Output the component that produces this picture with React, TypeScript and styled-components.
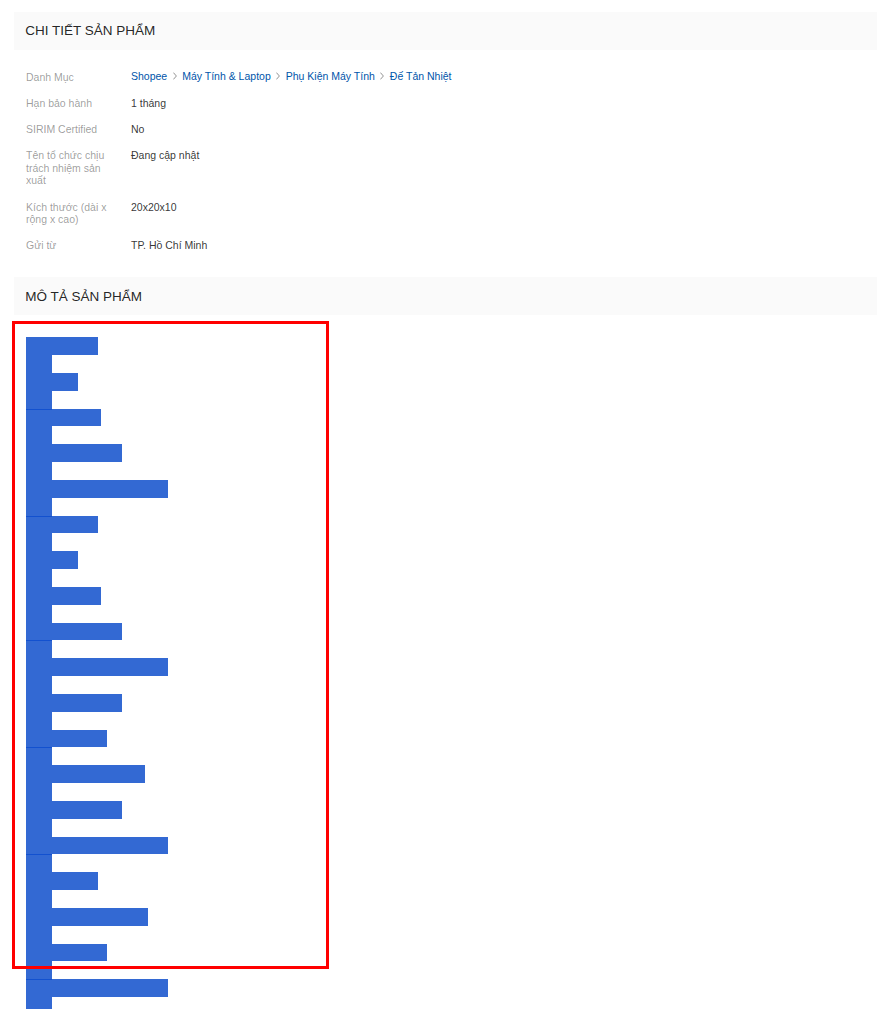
import React from "react";
import { styled, createGlobalStyle } from "styled-components";

const GlobalStyle = createGlobalStyle`
  html, body {
    margin: 0;
    padding: 0;
    background: #fff;
  }
  body {
    font-family: "Liberation Sans", Arial, sans-serif;
  }
`;

type Spec = { label: string; value?: string; crumbs?: string[] };

const SPECS: Spec[] = [
  { label: "Danh Mục", crumbs: ["Shopee", "Máy Tính & Laptop", "Phụ Kiện Máy Tính", "Đế Tản Nhiệt"] },
  { label: "Hạn bảo hành", value: "1 tháng" },
  { label: "SIRIM Certified", value: "No" },
  { label: "Tên tổ chức chịu trách nhiệm sản xuất", value: "Đang cập nhật" },
  { label: "Kích thước (dài x rộng x cao)", value: "20x20x10" },
  { label: "Gửi từ", value: "TP. Hồ Chí Minh" },
];

// widths of the highlighted (selected) lines in the description
const BAR_WIDTHS = [72, 52, 75, 96, 142, 72, 52, 75, 96, 142, 96, 81, 119, 96, 142, 72, 122, 81, 142, 72];
const MARKED_LINES = [4, 10, 17, 23, 29, 36];

const buildLines = () => {
  const lines: { width: number; marked: boolean }[] = [];
  BAR_WIDTHS.forEach(w => {
    lines.push({ width: w, marked: false });
    lines.push({ width: 26, marked: false });
  });
  return lines.map((l, i) => ({ ...l, marked: MARKED_LINES.includes(i) }));
};

const Chevron = () => (
  <ChevronIcon viewBox="0 0 4 8" width="4" height="8">
    <polyline points="0.4,0.6 3.4,4 0.4,7.4" fill="none" stroke="#777" strokeWidth="0.8" />
  </ChevronIcon>
);

const App = () => {
  const lines = buildLines();
  return (
    <Page>
      <GlobalStyle />
      <SectionHeader>CHI TIẾT SẢN PHẨM</SectionHeader>
      <SpecList>
        {SPECS.map(spec => (
          <SpecRow key={spec.label}>
            <SpecLabel>{spec.label}</SpecLabel>
            {spec.crumbs ? (
              <Breadcrumb>
                {spec.crumbs.map((c, i) => (
                  <React.Fragment key={c}>
                    {i > 0 && <Chevron />}
                    <CrumbLink>{c}</CrumbLink>
                  </React.Fragment>
                ))}
              </Breadcrumb>
            ) : (
              <SpecValue>{spec.value}</SpecValue>
            )}
          </SpecRow>
        ))}
      </SpecList>
      <SectionHeader>MÔ TẢ SẢN PHẨM</SectionHeader>
      <Description>
        {lines.map((l, i) => (
          <HighlightLine key={i} $width={l.width} $marked={l.marked} />
        ))}
      </Description>
      <FocusFrame />
    </Page>
  );
};

const Page = styled.div`
  position: relative;
  padding: 12px 10px 0 14px;
`;
const SectionHeader = styled.div`
  background: #fafafa;
  padding: 11.25px;
  font-size: 13.5px;
  line-height: 15px;
  color: rgba(0, 0, 0, 0.87);
  text-transform: uppercase;
`;
const SpecList = styled.div`
  display: flex;
  flex-direction: column;
  gap: 13.5px;
  padding: 21.5px 11.25px 25.5px 12px;
`;
const SpecRow = styled.div`
  display: grid;
  grid-template-columns: 105px 1fr;
  align-items: start;
  font-size: 10.5px;
  line-height: 12.6px;
`;
const SpecLabel = styled.div`
  padding-right: 14px;
  color: rgba(0, 0, 0, 0.4);
`;
const SpecValue = styled.div`
  color: rgba(0, 0, 0, 0.8);
`;
const Breadcrumb = styled.div`
  display: flex;
  align-items: center;
  margin-top: -1px;
`;
const CrumbLink = styled.span`
  color: #0055aa;
`;
const ChevronIcon = styled.svg`
  display: block;
  margin: 0 5.5px 0 5.5px;
`;
const Description = styled.div`
  display: flex;
  flex-direction: column;
  align-items: flex-start;
  padding: 22.5px 11.5px 0 12px;
`;
const HighlightLine = styled.div<{ $width: number; $marked: boolean }>`
  width: ${({ $width }) => $width}px;
  height: 17.83px;
  background: ${({ $marked }) =>
    $marked ? "linear-gradient(#1351cf, #1351cf) 0 0 / 26px 1px no-repeat, #3369d3" : "#3369d3"};
`;
const FocusFrame = styled.div`
  position: absolute;
  left: 12px;
  top: 321px;
  width: 311px;
  height: 642px;
  border: 3px solid #ff0000;
  pointer-events: none;
`;

export default App;
